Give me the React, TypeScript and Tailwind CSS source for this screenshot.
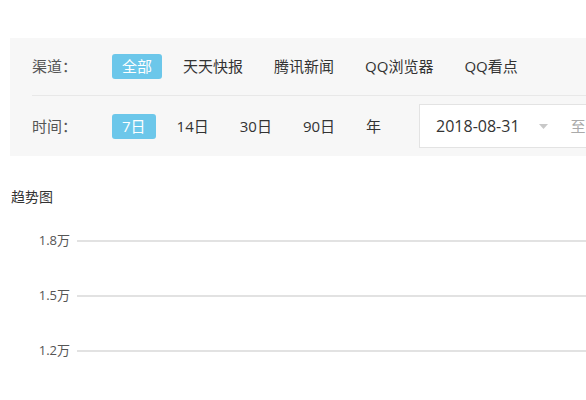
import React from "react";

const channels = ["全部", "天天快报", "腾讯新闻", "QQ浏览器", "QQ看点"];
const ranges = ["7日", "14日", "30日", "90日", "年"];
const ticks = ["1.8万", "1.5万", "1.2万"];

function Option({ label, active }: { label: string; active?: boolean }) {
  return (
    <span
      className={
        "shrink-0 px-[10px] h-[25px] leading-[25px] rounded-[3px] text-[15px] " +
        (active ? "bg-[#6cc7ea] text-white" : "text-[#333]")
      }
    >
      {label}
    </span>
  );
}

export default function App() {
  return (
    <div
      className="w-[586px] h-[400px] overflow-hidden bg-white whitespace-nowrap"
      style={{ fontFamily: '"Open Sans", "Noto Sans CJK SC", sans-serif' }}
    >
      {/* filter panel */}
      <div className="mt-[38px] ml-[10px] w-[620px] bg-[#f7f7f7] pl-[22px]">
        <div className="h-[58px] flex items-center border-b border-[#e8e8e8]">
          <span className="shrink-0 w-[80px] text-[15px] text-[#555]">渠道：</span>
          <div className="flex items-center gap-[11px]">
            {channels.map((c, i) => (
              <Option key={c} label={c} active={i === 0} />
            ))}
          </div>
        </div>
        <div className="h-[60px] flex items-center">
          <span className="shrink-0 w-[80px] text-[15px] text-[#555]">时间：</span>
          <div className="shrink-0 flex items-center gap-[11px]">
            {ranges.map((r, i) => (
              <Option key={r} label={r} active={i === 0} />
            ))}
          </div>
          <div className="shrink-0 ml-[28px] h-[44px] w-[220px] bg-white border border-[#e3e3e3] flex items-center pl-[16px] text-[16px]">
            <span className="text-[#333]">2018-08-31</span>
            <svg className="ml-[19px]" width="9" height="5" viewBox="0 0 9 5">
              <path d="M0 0h9L4.5 5z" fill="#c8c8c8" />
            </svg>
            <span className="ml-[23px] text-[15px] text-[#aaa]">至</span>
          </div>
        </div>
      </div>

      {/* trend chart */}
      <div className="mt-[30px] ml-[11px] text-[14px] text-[#333]">趋势图</div>
      <div className="mt-[25px] flex flex-col gap-[38px]">
        {ticks.map((t) => (
          <div key={t} className="flex items-center h-[17px]">
            <span className="w-[70px] text-right text-[13px] text-[#555]">{t}</span>
            <div className="ml-[7px] flex-1 h-[2px] bg-[#e2e2e2]" />
          </div>
        ))}
      </div>
    </div>
  );
}
